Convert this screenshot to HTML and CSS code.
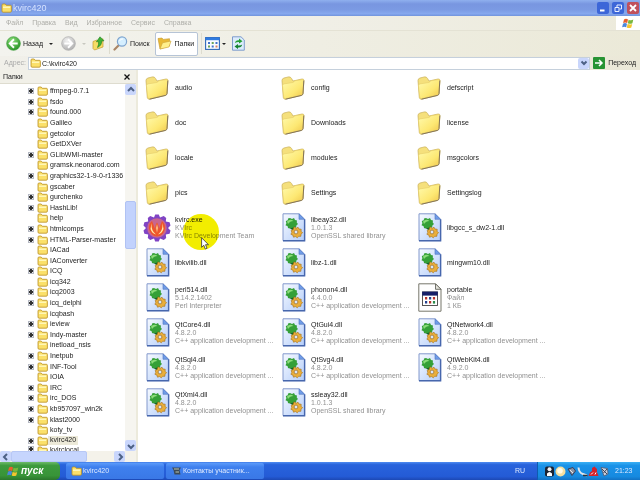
FILE: index.html
```
<!DOCTYPE html>
<html lang="ru">
<head>
<meta charset="utf-8">
<title>kvirc420</title>
<link rel="stylesheet" href="styles.css">
</head>
<body>
<svg class="defs" aria-hidden="true">
  <defs>
    <linearGradient id="gFold" x1="0" y1="0" x2="1" y2="1"><stop offset="0" stop-color="#fffbb0"/><stop offset=".6" stop-color="#fde873"/><stop offset="1" stop-color="#eec44a"/></linearGradient>
    <linearGradient id="gDoc" x1="0" y1="0" x2="1" y2="1"><stop offset="0" stop-color="#f6faff"/><stop offset="1" stop-color="#b4cdfa"/></linearGradient>
    <radialGradient id="gGreen" cx=".4" cy=".3" r=".8"><stop offset="0" stop-color="#8fe07c"/><stop offset="1" stop-color="#1c8a1c"/></radialGradient>
    <radialGradient id="gGray" cx=".4" cy=".3" r=".8"><stop offset="0" stop-color="#f2f2f2"/><stop offset="1" stop-color="#a8a8a8"/></radialGradient>
    <symbol id="folder" viewBox="0 0 24 24">
      <path d="M1 4.500Q1 2.500 3 2L7.500 .9Q9.500 .6 10.500 2.400L12 5 21 3Q23 2.800 22.900 4.500L22 17.500Q21.800 19 20.500 19.400L4.500 23.200Q2.600 23.400 2.300 21.500Z" fill="#f5e07c" stroke="#c9ae55" stroke-width=".7"/>
      <path d="M1.500 9.500Q1.500 8.200 3 7.900L12 6.500 14 4.800 21.600 3.600Q23 3.500 22.900 4.900L22 17.300Q21.800 18.700 20.500 19L4.600 22.500Q2.900 22.700 2.700 21Z" fill="url(#gFold)" stroke="#e2c862" stroke-width=".5"/>
      <path d="M22.800 4.500L22 17.500Q21.800 19 20.500 19.400L4.500 23.200" fill="none" stroke="#83745a" stroke-width="1"/>
    </symbol>
    <symbol id="sfolder" viewBox="0 0 11 10">
      <path d="M1 2Q1 1 2 1H4.200L5.300 2.300H9.400Q10.400 2.300 10.400 3.300V8Q10.400 9.200 9.300 9.200H2Q1 9.200 1 8Z" fill="#fbe06a" stroke="#b98f25" stroke-width=".8"/>
      <path d="M2 3.500H9.200V5H2Z" fill="#fff7b8"/>
    </symbol>
    <symbol id="dll" viewBox="0 0 24 29">
      <path d="M1 .8H17L22.600 6.300V27.600H1Z" fill="url(#gDoc)" stroke="#8298cc" stroke-width="1"/>
      <path d="M22.600 6.300V27.800H1" fill="none" stroke="#4767ad" stroke-width="1.400"/>
      <path d="M17 .8V6.300H22.600Z" fill="#6f9ce8" stroke="#4f74bd" stroke-width=".6"/>
      <path d="M8 5l2 1 2-1 1 2 2 .5-.3 2 1.300 1.500-1.600 1.400-.3 2.200-2.300.1-1.500 1.500-1.900-1.200-2.300.3-.5-2.100-2.100-1 .9-2-.6-2.100 2-.8L6 5.600Z" fill="#35a038"/>
      <path d="M5 8.500Q8 5.500 11.500 8 8 8 6 11Z" fill="#8bdc7a"/>
      <path d="M6.500 14.800Q9.500 16 12.800 13.400L11.500 17.500Z" fill="#176326"/>
      <path d="M12.500 14l1.600 1.300 1.900-1.100 1.100 1.900 2.100.1-.1 2.100 1.500 1.500-1.600 1.400-.1 2.100-2.100 0-1.500 1.500-1.700-1.200-2.100.6-.6-2-2-.9.9-1.900-.6-2 2-.8.500-2.200Z" fill="#e9ae3c" stroke="#a36d12" stroke-width=".6"/>
      <circle cx="14" cy="19" r="1.900" fill="#dbe7fc" stroke="#9a6a1c" stroke-width=".7"/>
    </symbol>
    <symbol id="prog" viewBox="0 0 24 29">
      <path d="M.8.8H17.500L23 6.300V28.200H.8Z" fill="#fefefe" stroke="#77776b"/>
      <path d="M17.500.8V6.300H23Z" fill="#e4e4dc" stroke="#55554d" stroke-width=".8"/>
      <rect x="4.500" y="9" width="15" height="13.500" fill="#fff" stroke="#444" stroke-width=".9"/>
      <rect x="4.200" y="8.600" width="15.600" height="4" fill="#151f68"/>
      <path d="M7 14h2.200v2.600H7zM14.900 14h2.200v2.600h-2.200zM11 18h2.200v2.600H11z" fill="#b8322c"/>
      <path d="M11 14h2.200v2.600H11zM7 18h2.200v2.600H7z" fill="#23408e"/>
      <path d="M14.900 18h2.200v2.600h-2.200z" fill="#2a8a4a"/>
    </symbol>
    <symbol id="kvirc" viewBox="0 0 28 28">
      <path d="M12.200 .5h3.600l1.200 3 3.800-1.500 2.400 2-.4 3.500 3.800.8.900 3.200-2.500 2.500 2.500 2.500-.9 3.200-3.800.8.400 3.500-2.400 2-3.800-1.500-1.200 3h-3.600l-1.200-3-3.800 1.500-2.400-2 .4-3.500-3.800-.8-.9-3.200L3 14 .5 11.500l.9-3.200 3.800-.8L4.800 4l2.400-2L11 3.500Z" fill="#8044c4"/>
      <circle cx="14" cy="14" r="9.800" fill="#c9668f"/>
      <path d="M14 8.500Q16.500 12 15.500 16L19 7Q23.500 11 21.500 16.500 19.500 22 14 22.500 8.500 22 6.500 16.500 4.500 11 9 7L12.500 16Q11.500 12 14 8.500Z" fill="#ee562b"/>
      <path d="M14 10Q15.500 14 14 19 12.500 14 14 10ZM8.500 9Q8 17 13 20.500 9 19.500 7.500 15ZM19.500 9Q20 17 15 20.500 19 19.500 20.500 15Z" fill="#ffeaa8"/>
    </symbol>
    <symbol id="flag" viewBox="0 0 12 11">
      <path d="M2 1.500Q4 .2 6 1.500L5.200 5Q3.200 4 1.100 5Z" fill="#e7602e"/>
      <path d="M6.600 1.700Q9 2.900 11.300 1.600L10.400 5.200Q8 6.200 5.800 5.200Z" fill="#79b83c"/>
      <path d="M1 5.700Q3 4.500 5 5.700L4.200 9.300Q2.200 8 .1 9.300Z" fill="#4b87dc"/>
      <path d="M5.600 6Q8 7 10.200 5.900L9.300 9.500Q7 10.600 4.800 9.500Z" fill="#f4c52e"/>
    </symbol>
  </defs>
</svg>

<div class="window">
  <header class="title">
    <svg class="i11"><use href="#sfolder"/></svg>
    <h1>kvirc420</h1>
    <div class="winbtns">
      <button aria-label="Свернуть"><svg viewBox="0 0 12 12"><path d="M3 8.500h4.500" stroke="#fff" stroke-width="2"/></svg></button>
      <button aria-label="Восстановить"><svg viewBox="0 0 12 12" fill="none" stroke="#e8eeff"><path d="M5 5V3h4.500v4H7.500M3 5.500h4v4H3z"/></svg></button>
      <button class="close" aria-label="Закрыть"><svg viewBox="0 0 12 12"><path d="M3 3l6 6M9 3l-6 6" stroke="#fff" stroke-width="1.800"/></svg></button>
    </div>
  </header>

  <div class="menubar">
    <nav class="menu">
      <button>Файл</button><button>Правка</button><button>Вид</button><button>Избранное</button><button>Сервис</button><button>Справка</button>
    </nav>
    <div class="brand"><svg><use href="#flag"/></svg></div>
  </div>

  <div class="toolbar">
    <button class="tool back"><svg class="i15" viewBox="0 0 16 16"><circle cx="8" cy="8" r="7.300" fill="url(#gGreen)" stroke="#3d9b38" stroke-width=".7"/><path d="M8.500 3.500L4 8l4.500 4.500M4.500 8H12.500" fill="none" stroke="#fff" stroke-width="2"/></svg><span>Назад</span><i class="arrow"></i></button>
    <button class="tool forward" aria-label="Вперед"><svg class="i15" viewBox="0 0 16 16"><circle cx="8" cy="8" r="7.300" fill="url(#gGray)" stroke="#aaa" stroke-width=".7"/><path d="M7.500 3.500L12 8l-4.500 4.500M11.500 8h-8" fill="none" stroke="#fff" stroke-width="2"/></svg><i class="arrow dim"></i></button>
    <button class="tool up" aria-label="Вверх"><svg class="i15" viewBox="0 0 15 15"><path d="M2 5.500L6 4l1 1 5-2.200V11L3.500 14 2 12.500Z" fill="#f7dc66" stroke="#c29b30" stroke-width=".7"/><path d="M9 .8l4 4-2.300.2Q10.800 9.500 6.500 11.500 8 8.500 7.500 5.600L5.400 5.800Z" fill="#3fb335" stroke="#217d20" stroke-width=".6"/></svg></button>
    <span class="sep"></span>
    <button class="tool search"><svg class="i15" viewBox="0 0 15 15"><path d="M6 9L1.500 13.500" stroke="#a98565" stroke-width="2.200" stroke-linecap="round"/><circle cx="9" cy="5.500" r="4.600" fill="#d5efff" stroke="#7ea5cf" stroke-width="1.200"/><path d="M6.500 5Q7.500 2.500 10 3" stroke="#fff" fill="none"/></svg><span>Поиск</span></button>
    <button class="tool pressed" aria-pressed="true"><svg class="i15" viewBox="0 0 15 15"><path d="M1 2.500L5 2l1.200 1.400 6.300-.7V10L3 13Z" fill="#e9ba35" stroke="#c3952a" stroke-width=".6"/><path d="M3 13L5.500 6.800 14 5l-2 6Z" fill="#fff08c" stroke="#cda336" stroke-width=".6"/></svg><span>Папки</span></button>
    <span class="sep"></span>
    <button class="tool views" aria-label="Вид"><svg class="i15" viewBox="0 0 15 13"><rect x=".6" y=".6" width="13.800" height="11.800" fill="#fbfdff" stroke="#2f69b8" stroke-width="1.100"/><path d="M.6.6h13.800v2.600H.6z" fill="#2f7be0"/><path d="M3 5h2v2H3zM10.500 5h2v2h-2zM6.700 8.500h2v2h-2z" fill="#4373c9"/><path d="M6.700 5h2v2h-2zM3 8.500h2v2H3z" fill="#6aa457"/><path d="M10.500 8.500h2v2h-2z" fill="#d98060"/></svg><i class="arrow"></i></button>
    <button class="tool" aria-label="Обновить"><svg class="i15" viewBox="0 0 15 15"><path d="M1.500.8H10L13.300 4V14.200H1.500Z" fill="#dcecfc" stroke="#7393c8" stroke-width=".9"/><path d="M4 7Q4.500 3.800 8 4.200L8 2.500 11.500 5.200 8 7.500V6Q6 5.800 4 7Z" fill="#25a035"/><path d="M11.200 8.500Q10.500 12 7 11.500V13L3.500 10.400 7 8V9.500Q9.500 9.800 11.200 8.500Z" fill="#168331"/></svg></button>
  </div>

  <form class="address">
    <label for="path">Адрес:</label>
    <div class="field">
      <svg class="i11"><use href="#sfolder"/></svg>
      <input id="path" type="text" value="C:\kvirc420">
      <button type="button" class="sb" aria-label="Список адресов"><svg viewBox="0 0 10 10"><path d="M2.500 3.500L5 6l2.500-2.500"/></svg></button>
    </div>
    <button type="button" class="go"><svg viewBox="0 0 12 12"><rect width="12" height="12" rx="1" fill="#279334"/><path d="M2 6h7M6 3l3 3-3 3" fill="none" stroke="#fff" stroke-width="1.500"/></svg><span>Переход</span></button>
  </form>

  <div class="main">
    <aside class="side">
      <div class="sidehead"><h2>Папки</h2><button aria-label="Закрыть панель"><svg viewBox="0 0 6 6"><path d="M.5.5l5 5M5.500.5l-5 5" stroke="#111" stroke-width="1.300"/></svg></button></div>
      <div class="treebox">
        <ul class="tree">
          <li class="p"><svg><use href="#sfolder"/></svg><span>ffmpeg-0.7.1</span></li>
          <li class="p"><svg><use href="#sfolder"/></svg><span>fsdo</span></li>
          <li class="p"><svg><use href="#sfolder"/></svg><span>found.000</span></li>
          <li><svg><use href="#sfolder"/></svg><span>Galileo</span></li>
          <li><svg><use href="#sfolder"/></svg><span>getcolor</span></li>
          <li><svg><use href="#sfolder"/></svg><span>GetDXVer</span></li>
          <li class="p"><svg><use href="#sfolder"/></svg><span>GLibWMI-master</span></li>
          <li><svg><use href="#sfolder"/></svg><span>gramsk.neonarod.com</span></li>
          <li class="p"><svg><use href="#sfolder"/></svg><span>graphics32-1-9-0-r1336</span></li>
          <li><svg><use href="#sfolder"/></svg><span>gscaber</span></li>
          <li class="p"><svg><use href="#sfolder"/></svg><span>gurchenko</span></li>
          <li class="p"><svg><use href="#sfolder"/></svg><span>HashLib!</span></li>
          <li><svg><use href="#sfolder"/></svg><span>help</span></li>
          <li class="p"><svg><use href="#sfolder"/></svg><span>htmlcomps</span></li>
          <li class="p"><svg><use href="#sfolder"/></svg><span>HTML-Parser-master</span></li>
          <li><svg><use href="#sfolder"/></svg><span>IACad</span></li>
          <li><svg><use href="#sfolder"/></svg><span>IAConverter</span></li>
          <li class="p"><svg><use href="#sfolder"/></svg><span>ICQ</span></li>
          <li><svg><use href="#sfolder"/></svg><span>icq342</span></li>
          <li class="p"><svg><use href="#sfolder"/></svg><span>icq2003</span></li>
          <li class="p"><svg><use href="#sfolder"/></svg><span>icq_delphi</span></li>
          <li><svg><use href="#sfolder"/></svg><span>icqbash</span></li>
          <li class="p"><svg><use href="#sfolder"/></svg><span>ieview</span></li>
          <li class="p"><svg><use href="#sfolder"/></svg><span>Indy-master</span></li>
          <li><svg><use href="#sfolder"/></svg><span>inetload_nsis</span></li>
          <li class="p"><svg><use href="#sfolder"/></svg><span>Inetpub</span></li>
          <li class="p"><svg><use href="#sfolder"/></svg><span>INF-Tool</span></li>
          <li><svg><use href="#sfolder"/></svg><span>IOIA</span></li>
          <li class="p"><svg><use href="#sfolder"/></svg><span>IRC</span></li>
          <li class="p"><svg><use href="#sfolder"/></svg><span>irc_DOS</span></li>
          <li class="p"><svg><use href="#sfolder"/></svg><span>kb957097_win2k</span></li>
          <li class="p"><svg><use href="#sfolder"/></svg><span>klast2000</span></li>
          <li><svg><use href="#sfolder"/></svg><span>koty_tv</span></li>
          <li class="p"><svg><use href="#sfolder"/></svg><span class="sel">kvirc420</span></li>
          <li class="p cut"><svg><use href="#sfolder"/></svg><span>kvirclocal</span></li>
        </ul>
        <div class="vbar">
          <button class="sb" aria-label="Вверх"><svg viewBox="0 0 10 10"><path d="M2 6l3-3 3 3"/></svg></button>
          <div class="vtrack"><div class="vthumb"></div></div>
          <button class="sb" aria-label="Вниз"><svg viewBox="0 0 10 10"><path d="M2 4l3 3 3-3"/></svg></button>
        </div>
      </div>
      <div class="hbar">
        <button class="sb" aria-label="Влево"><svg viewBox="0 0 10 10"><path d="M6 2L3 5l3 3"/></svg></button>
        <div class="htrack"><div class="hthumb"></div></div>
        <button class="sb" aria-label="Вправо"><svg viewBox="0 0 10 10"><path d="M4 2l3 3-3 3"/></svg></button>
      </div>
    </aside>

    <main class="files">
      <div class="file"><svg class="fo"><use href="#folder"/></svg><p><b>audio</b></p></div>
      <div class="file"><svg class="fo"><use href="#folder"/></svg><p><b>config</b></p></div>
      <div class="file"><svg class="fo"><use href="#folder"/></svg><p><b>defscript</b></p></div>
      <div class="file"><svg class="fo"><use href="#folder"/></svg><p><b>doc</b></p></div>
      <div class="file"><svg class="fo"><use href="#folder"/></svg><p><b>Downloads</b></p></div>
      <div class="file"><svg class="fo"><use href="#folder"/></svg><p><b>license</b></p></div>
      <div class="file"><svg class="fo"><use href="#folder"/></svg><p><b>locale</b></p></div>
      <div class="file"><svg class="fo"><use href="#folder"/></svg><p><b>modules</b></p></div>
      <div class="file"><svg class="fo"><use href="#folder"/></svg><p><b>msgcolors</b></p></div>
      <div class="file"><svg class="fo"><use href="#folder"/></svg><p><b>pics</b></p></div>
      <div class="file"><svg class="fo"><use href="#folder"/></svg><p><b>Settings</b></p></div>
      <div class="file"><svg class="fo"><use href="#folder"/></svg><p><b>Settingslog</b></p></div>
      <div class="file hot"><svg class="kv"><use href="#kvirc"/></svg><p><b>kvirc.exe</b><span>KVIrc</span><span>KVIrc Development Team</span></p>
        <div class="spot"></div>
        <svg class="cursor" viewBox="0 0 8 13"><path d="M.6.8v9.500l2.200-2 1.500 3.700 1.700-.8L4.500 7.700h3Z" fill="#fff" stroke="#333" stroke-width=".8"/></svg>
      </div>
      <div class="file"><svg class="dl"><use href="#dll"/></svg><p><b>libeay32.dll</b><span>1.0.1.3</span><span>OpenSSL shared library</span></p></div>
      <div class="file"><svg class="dl"><use href="#dll"/></svg><p><b>libgcc_s_dw2-1.dll</b></p></div>
      <div class="file"><svg class="dl"><use href="#dll"/></svg><p><b>libkvilib.dll</b></p></div>
      <div class="file"><svg class="dl"><use href="#dll"/></svg><p><b>libz-1.dll</b></p></div>
      <div class="file"><svg class="dl"><use href="#dll"/></svg><p><b>mingwm10.dll</b></p></div>
      <div class="file"><svg class="dl"><use href="#dll"/></svg><p><b>perl514.dll</b><span>5.14.2.1402</span><span>Perl Interpreter</span></p></div>
      <div class="file"><svg class="dl"><use href="#dll"/></svg><p><b>phonon4.dll</b><span>4.4.0.0</span><span>C++ application development ...</span></p></div>
      <div class="file"><svg class="dl"><use href="#prog"/></svg><p><b>portable</b><span>Файл</span><span>1 КБ</span></p></div>
      <div class="file"><svg class="dl"><use href="#dll"/></svg><p><b>QtCore4.dll</b><span>4.8.2.0</span><span>C++ application development ...</span></p></div>
      <div class="file"><svg class="dl"><use href="#dll"/></svg><p><b>QtGui4.dll</b><span>4.8.2.0</span><span>C++ application development ...</span></p></div>
      <div class="file"><svg class="dl"><use href="#dll"/></svg><p><b>QtNetwork4.dll</b><span>4.8.2.0</span><span>C++ application development ...</span></p></div>
      <div class="file"><svg class="dl"><use href="#dll"/></svg><p><b>QtSql4.dll</b><span>4.8.2.0</span><span>C++ application development ...</span></p></div>
      <div class="file"><svg class="dl"><use href="#dll"/></svg><p><b>QtSvg4.dll</b><span>4.8.2.0</span><span>C++ application development ...</span></p></div>
      <div class="file"><svg class="dl"><use href="#dll"/></svg><p><b>QtWebKit4.dll</b><span>4.9.2.0</span><span>C++ application development ...</span></p></div>
      <div class="file"><svg class="dl"><use href="#dll"/></svg><p><b>QtXml4.dll</b><span>4.8.2.0</span><span>C++ application development ...</span></p></div>
      <div class="file"><svg class="dl"><use href="#dll"/></svg><p><b>ssleay32.dll</b><span>1.0.1.3</span><span>OpenSSL shared library</span></p></div>
    </main>
  </div>
</div>

<footer class="taskbar">
  <button class="start"><svg><use href="#flag"/></svg><span>пуск</span></button>
  <div class="tasks">
    <button><svg class="i11"><use href="#sfolder"/></svg><span>kvirc420</span></button>
    <button><svg class="i11" viewBox="0 0 11 10"><path d="M1 1.500h9L8.500 4 9.500 8.500H3.500L2.500 4Z" fill="#3c4a58"/><path d="M3 3h5M4.500 6h3.500" stroke="#b9c6b4"/></svg><span>Контакты участник...</span></button>
  </div>
  <span class="lang">RU</span>
  <div class="tray">
    <svg viewBox="0 0 11 11"><rect x="1" y=".5" width="9" height="10" rx="2" fill="#1a2433"/><circle cx="5.500" cy="3.200" r="2" fill="#f3f3f3"/><path d="M3 10V7.500Q5.500 4.500 8 7.500V10Z" fill="#fff"/></svg>
    <svg viewBox="0 0 11 11"><circle cx="5.500" cy="5.500" r="5" fill="#f3dfa0"/><circle cx="5" cy="4.800" r="2.800" fill="#fffbe6"/></svg>
    <svg viewBox="0 0 11 11"><path d="M2 3l5-1.500L9.500 5 6 9.500Z" fill="#8d93a3" stroke="#34405e"/><path d="M4 4l3 3" stroke="#e8e8e8"/></svg>
    <svg viewBox="0 0 11 11"><path d="M1.500 1.500Q2 7 6 8l4 1.500" fill="none" stroke="#dfe6ee" stroke-width="2"/><path d="M6 9.500h4.500" stroke="#27343f" stroke-width="1.500"/></svg>
    <svg viewBox="0 0 11 11"><path d="M.5 10L2 6.500 4 5V2L6.500.5 9 3v3l1.500 4Z" fill="#d5222c"/><path d="M3 8.500l2-2M7 8.500l1-2" stroke="#fff"/></svg>
    <svg viewBox="0 0 11 11"><path d="M2 1.500l6.500 1L9 8 5 10Z" fill="#cbd2df" stroke="#4a5570" stroke-width=".8"/><path d="M3 3l5 5M8 3L4.500 7" stroke="#3c4359"/></svg>
    <time>21:23</time>
  </div>
</footer>
</body>
</html>
```
FILE: styles.css
```
*, *::before { box-sizing: border-box; }
html, body { height: 100%; margin: 0; }
body {
  display: flex;
  flex-direction: column;
  font: 7px/8px "Liberation Sans", Arial, sans-serif;
  color: #222;
  background: #fff;
  overflow: hidden;
}
h1, h2, p, ul { margin: 0; padding: 0; font: inherit; }
b { font-weight: normal; }
li { list-style: none; }
svg { display: block; flex: none; }
button, input {
  font: inherit;
  color: inherit;
  border: 0;
  padding: 0;
  margin: 0;
  background: none;
}
button { display: flex; align-items: center; white-space: nowrap; }
.defs { position: absolute; width: 0; height: 0; }
.i11 { width: 11px; height: 10px; }
.i15 { width: 15px; height: 15px; }

.window { flex: 1; min-height: 0; display: flex; flex-direction: column; }

.title {
  display: flex;
  align-items: center;
  gap: 1px;
  height: 16px;
  padding: 0 1px;
  color: #d5e2ff;
  background: linear-gradient(#8fb0ee, #7896e0 25%, #7b9ae3 60%, #86a8ee 85%, #7194dc);
}
.title h1 { flex: 1; font-size: 9px; line-height: 12px; }
.winbtns { display: flex; gap: 3px; }
.winbtns button { width: 12px; height: 12px; border-radius: 2px; background: #3c66d8; }
.winbtns .close { background: #c0505c; }
.winbtns svg { width: 12px; height: 12px; }

.menubar { display: flex; justify-content: space-between; height: 15px; background: linear-gradient(90deg, #f4f4f2, #eceadb); border-bottom: 1px solid #e4e2d4; }
.menu { display: flex; gap: 9px; padding-left: 6px; color: #aeaea9; }
.brand { display: flex; align-items: center; justify-content: center; width: 24px; background: #fff; }
.brand svg { width: 12px; height: 11px; }

.toolbar {
  display: flex;
  align-items: center;
  height: 25px;
  padding-left: 6px;
  background: linear-gradient(90deg, #f3f3ee, #ebe9d8);
}
.tool { gap: 2px; }
.arrow { border: 2px solid transparent; border-top-color: #222; border-bottom: 0; margin-left: 4px; }
.arrow.dim { border-top-color: #c8c8c0; }
.forward { margin-left: 8px; }
.up { margin-left: 5px; }
.sep { width: 1px; height: 21px; margin: 0 3px; background: #dddccf; }
.pressed { width: 43px; height: 24px; margin-left: 6px; padding-left: 1px; background: #fff; border: 1px solid #b6c4d6; border-radius: 2px; }
.views .arrow { margin-left: 0; }
.views { margin-right: 5px; }
.views svg { height: 13px; }

.address { display: flex; align-items: center; height: 14px; padding: 0 4px; background: linear-gradient(90deg, #f1f0ea, #ebe8d8); }
.address label { width: 24px; color: #aaa; }
.field { flex: 1; display: flex; align-items: center; height: 13px; padding-left: 1px; background: #fff; border: 1px solid #c5d0dc; }
.field input { flex: 1; min-width: 0; padding-left: 1px; height: 10px; }
.sb { flex: none; justify-content: center; width: 11px; height: 11px; background: #c9d6fc; border-radius: 2px; }
.sb svg { width: 10px; height: 10px; fill: none; stroke: #4d6185; stroke-width: 2; }
.go { gap: 3px; margin-left: 3px; }
.go svg { width: 12px; height: 12px; }

.main { flex: 1; min-height: 0; display: flex; }
.side { flex: none; width: 138px; display: flex; flex-direction: column; border-right: 2px solid #eceadc; }
.sidehead { display: flex; align-items: center; justify-content: space-between; height: 14px; padding: 0 6px 0 3px; background: #f1f0e8; border-bottom: 1px solid #dedccf; }
.sidehead svg { width: 6px; height: 6px; }
.treebox { flex: 1; min-height: 0; display: flex; }
.tree { flex: 1; min-width: 0; display: grid; grid-template-rows: repeat(34, minmax(0, 1fr)) 5px; padding-top: 2px; overflow: hidden; }
.tree li { display: flex; align-items: center; min-height: 0; padding-left: 37px; white-space: nowrap; }
.tree .cut { align-items: flex-start; overflow: hidden; }
.tree svg { width: 11px; height: 10px; }
.tree span { padding: 0 2px; }
.tree .sel { background: #ece9d8; padding-bottom: 1px; }
.tree .p { padding-left: 28px; }
.tree .p::before {
  content: "";
  flex: none;
  width: 6px;
  height: 6px;
  margin-right: 3px;
  border: 1px solid #b4b8c2;
  background: linear-gradient(#333, #333) center / 4px 2px no-repeat, linear-gradient(#333, #333) center / 2px 4px no-repeat, #eee;
}
.vbar { width: 11px; display: flex; flex-direction: column; background: #f6f5f0; }
.vtrack { flex: 1; padding-top: 106px; }
.vthumb { height: 48px; background: #c2d2fd; border: 1px solid #b0c2f3; border-radius: 2px; }
.hbar { display: flex; height: 11px; padding-right: 11px; background: #f4f2ea; }
.htrack { flex: 1; }
.hthumb { width: 76px; height: 11px; background: #c6d5fd; border: 1px solid #b8c8f5; border-radius: 2px; }

.files {
  flex: 1;
  display: grid;
  grid-template-columns: repeat(3, 136px);
  grid-auto-rows: 35px;
  align-content: start;
  padding-left: 7px;
  background: #fff;
}
.file { position: relative; display: flex; align-items: center; }
.file p { display: flex; flex-direction: column; white-space: nowrap; }
.file p span { color: #919191; }
.fo { width: 24px; height: 24px; margin-right: 6px; }
.dl { width: 24px; height: 29px; margin: 0 5px 0 1px; }
.kv { width: 28px; height: 28px; margin: 0 4px 0 -2px; }
.spot { position: absolute; left: 38px; top: 4px; width: 36px; height: 36px; border-radius: 50%; background: #f2ed00; mix-blend-mode: multiply; }
.cursor { position: absolute; left: 56px; top: 27px; width: 8px; height: 13px; }

.taskbar {
  display: flex;
  align-items: stretch;
  height: 18px;
  color: #dce8ff;
  background: linear-gradient(#4f8cf0, #2863dc 15%, #245bd6 80%, #1c48b4);
}
.start {
  width: 60px;
  gap: 2px;
  padding-left: 7px;
  color: #fff;
  font: italic bold 10px/12px "Liberation Sans", Arial, sans-serif;
  background: linear-gradient(#6dbb6a, #3d9a3d 20%, #389438 75%, #2b762c);
  border-radius: 0 5px 5px 0;
}
.start svg { width: 12px; height: 11px; }
.tasks { flex: 1; display: flex; gap: 2px; padding: 1px 0 1px 6px; }
.tasks button { width: 98px; padding-left: 5px; gap: 1px; border-radius: 2px; background: linear-gradient(#5c9bfa, #3f80ee 25%, #3a78e6); }
.lang { width: 22px; align-self: center; }
.tray { display: flex; align-items: center; width: 103px; padding-left: 6px; background: linear-gradient(#3bb0f4, #1a92e8 20%, #168ae0 80%, #1272c4); border-left: 1px solid #0d5cb0; }
.tray svg { width: 11px; height: 11px; }
.tray time { margin-left: 5px; }
```
